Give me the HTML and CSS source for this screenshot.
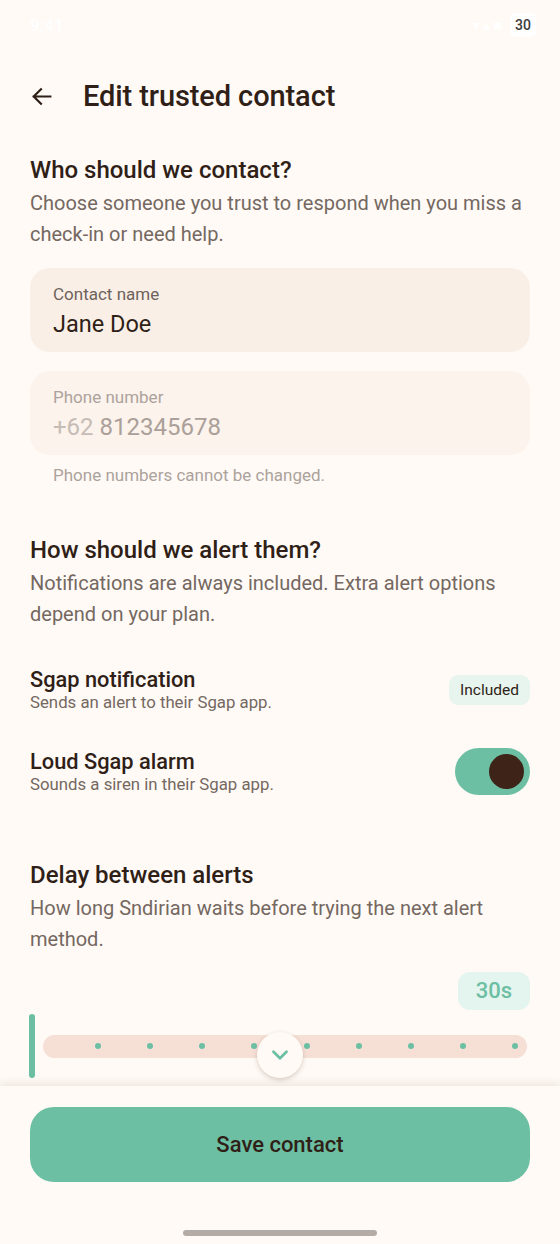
FILE: index.html
```html
<!DOCTYPE html>
<html lang="en">
<head>
<meta charset="utf-8">
<title>Edit trusted contact</title>
<link rel="stylesheet" href="styles.css">
</head>
<body>
<div class="screen">
  <div class="status">
    <span class="time">9:41</span>
    <div class="status-right">
      <span class="sys">▾ ▴ ■</span>
      <span class="battery">30</span>
    </div>
  </div>

  <header class="appbar">
    <svg class="back" viewBox="0 0 24 24" width="25" height="25" aria-hidden="true">
      <path d="M20.5 12H4.5M11.5 5L4.5 12L11.5 19" fill="none" stroke="#2f1f17" stroke-width="2.1" stroke-linecap="square" stroke-linejoin="miter"/>
    </svg>
    <h1 class="title">Edit trusted contact</h1>
  </header>

  <main class="content">
    <section class="sec sec-contact">
      <h2 class="sec-title">Who should we contact?</h2>
      <p class="sec-desc">Choose someone you trust to respond when you miss a check-in or need help.</p>

      <div class="field">
        <div class="field-label">Contact name</div>
        <div class="field-value">Jane Doe</div>
      </div>

      <div class="field field-disabled">
        <div class="field-label">Phone number</div>
        <div class="field-value phone"><span class="prefix">+62</span> 812345678</div>
      </div>
      <div class="helper">Phone numbers cannot be changed.</div>
    </section>

    <section class="sec sec-alert">
      <h2 class="sec-title">How should we alert them?</h2>
      <p class="sec-desc">Notifications are always included. Extra alert options depend on your plan.</p>

      <div class="option option-first">
        <div class="option-text">
          <div class="option-title">Sgap notification</div>
          <div class="option-sub">Sends an alert to their Sgap app.</div>
        </div>
        <span class="pill">Included</span>
      </div>

      <div class="option option-second">
        <div class="option-text">
          <div class="option-title">Loud Sgap alarm</div>
          <div class="option-sub">Sounds a siren in their Sgap app.</div>
        </div>
        <div class="toggle"><span class="thumb"></span></div>
      </div>
    </section>

    <section class="sec sec-delay">
      <h2 class="sec-title">Delay between alerts</h2>
      <p class="sec-desc">How long Sndirian waits before trying the next alert method.</p>
      <div class="value-row"><span class="value-pill">30s</span></div>
      <div class="slider">
        <span class="slider-edge"></span>
        <div class="track">
          <span class="dot"></span><span class="dot"></span><span class="dot"></span>
          <span class="dot"></span><span class="dot"></span><span class="dot"></span>
          <span class="dot"></span><span class="dot"></span><span class="dot"></span>
        </div>
        <div class="scroll-btn">
          <svg viewBox="0 0 24 24" width="26" height="26" aria-hidden="true">
            <path d="M6 9L12 15L18 9" fill="none" stroke="#6cbfa3" stroke-width="2.6" stroke-linecap="round" stroke-linejoin="round"/>
          </svg>
        </div>
      </div>
    </section>
  </main>

  <footer class="footer">
    <button class="save" type="button">Save contact</button>
    <div class="home"></div>
  </footer>
</div>
</body>
</html>
```

FILE: styles.css
```css
* { box-sizing: border-box; }

html, body {
  margin: 0;
  padding: 0;
  background: #fffaf6;
}

body {
  font-family: Roboto, "Noto Sans", "Liberation Sans", sans-serif;
  color: #2f1f17;
}

.screen {
  width: 560px;
  height: 1244px;
  display: flex;
  flex-direction: column;
  overflow: hidden;
  background: #fffaf6;
}

/* status bar */
.status {
  height: 50px;
  flex: none;
  display: flex;
  align-items: center;
  justify-content: space-between;
  padding: 0 24px 0 30px;
}
.time {
  color: #ffffff;
  font-size: 17px;
  font-weight: 500;
}
.status-right {
  display: flex;
  align-items: center;
  gap: 8px;
}
.sys {
  color: #ffffff;
  font-size: 14px;
}
.battery {
  background: #ffffff;
  color: #3c3a39;
  font-size: 14px;
  font-weight: 500;
  padding: 4px 5px;
  border-radius: 5px;
  line-height: 16px;
}

/* app bar */
.appbar {
  height: 92px;
  flex: none;
  display: flex;
  align-items: center;
  padding: 0 29px;
  gap: 29px;
}
.back { flex: none; display: block; }
.title {
  margin: 0;
  font-size: 29px;
  font-weight: 500;
  letter-spacing: -0.1px;
  color: #2f1f17;
}

/* content */
.content {
  flex: 1;
  min-height: 0;
  overflow: hidden;
  padding: 0 30px;
}

.sec-title {
  margin: 0;
  font-size: 24px;
  line-height: 30px;
  font-weight: 500;
  color: #2f1f17;
}
.sec-desc {
  margin: 3px 0 0;
  font-size: 20px;
  line-height: 31px;
  color: #746861;
}

.sec-contact { padding-top: 13px; }

.field {
  margin-top: 18px;
  height: 84px;
  border-radius: 20px;
  background: #faefe6;
  padding: 16px 23px 0;
}
.field + .field { margin-top: 19px; }
.field-label {
  font-size: 17px;
  line-height: 20px;
  color: #6d625b;
}
.field-value {
  margin-top: 6px;
  font-size: 23.5px;
  line-height: 28px;
  color: #2f1f17;
}
.field-value.phone { font-size: 24px; }
.field-disabled { background: #fcf3ec; }
.field-disabled .field-label { color: #aca29c; }
.field-disabled .field-value { color: #aba099; }
.prefix { color: #c6bcb5; }

.helper {
  margin: 10px 0 0 23px;
  font-size: 17px;
  line-height: 20px;
  color: #aca29c;
}

.sec-alert { padding-top: 50px; }

.option {
  display: flex;
  align-items: center;
  justify-content: space-between;
}
.option-first { margin-top: 38px; }
.option-second { margin-top: 36px; }
.option-title {
  font-size: 21.8px;
  line-height: 24px;
  font-weight: 500;
  color: #2f1f17;
}
.option-sub {
  font-size: 16.8px;
  line-height: 20px;
  color: #746861;
}
.pill {
  background: #e8f4ee;
  color: #2f1f17;
  font-size: 15.5px;
  line-height: 20px;
  padding: 5px 11px;
  border-radius: 9px;
}
.toggle {
  width: 75px;
  height: 47px;
  border-radius: 24px;
  background: #6cbfa3;
  display: flex;
  align-items: center;
  justify-content: flex-end;
  padding-right: 6px;
}
.thumb {
  width: 35px;
  height: 35px;
  border-radius: 50%;
  background: #3e2418;
}

.sec-delay { padding-top: 65px; }

.value-row {
  display: flex;
  justify-content: flex-end;
  margin-top: 17px;
}
.value-pill {
  background: #e4f4ee;
  color: #6cbfa3;
  font-size: 22px;
  font-weight: 500;
  line-height: 38px;
  padding: 0 18px;
  border-radius: 12px;
}

.slider {
  position: relative;
  margin-top: 4px;
  height: 64px;
  display: flex;
  align-items: center;
  gap: 8px;
}
.slider-edge {
  flex: none;
  width: 6px;
  height: 64px;
  border-radius: 3px;
  background: #6cbfa3;
  margin-left: -1px;
}
.track {
  flex: 1;
  height: 23px;
  margin-right: 3px;
  border-radius: 12px;
  background: #f6e0d6;
  display: flex;
  align-items: center;
  justify-content: space-between;
  padding: 0 9px 0 52px;
}
.dot {
  width: 6px;
  height: 6px;
  border-radius: 50%;
  background: #6cbfa3;
}
.scroll-btn {
  position: absolute;
  left: 227px;
  top: 18px;
  width: 46px;
  height: 46px;
  border-radius: 50%;
  background: #fffaf6;
  box-shadow: 0 2px 5px rgba(80, 50, 30, 0.22);
  display: flex;
  align-items: center;
  justify-content: center;
}
.scroll-btn svg { display: block; }

/* footer */
.footer {
  flex: none;
  height: 158px;
  background: #fffaf6;
  box-shadow: 0 -3px 8px rgba(90, 60, 40, 0.10);
  padding: 21px 30px 0;
  display: flex;
  flex-direction: column;
  align-items: center;
  position: relative;
}
.save {
  width: 100%;
  height: 75px;
  border: none;
  border-radius: 24px;
  background: #6cbfa3;
  color: #2f1f17;
  font-family: Roboto, "Noto Sans", "Liberation Sans", sans-serif;
  font-size: 22px;
  font-weight: 500;
}
.home {
  margin-top: 48px;
  width: 194px;
  height: 6px;
  border-radius: 3px;
  background: #b3aca6;
}
```
